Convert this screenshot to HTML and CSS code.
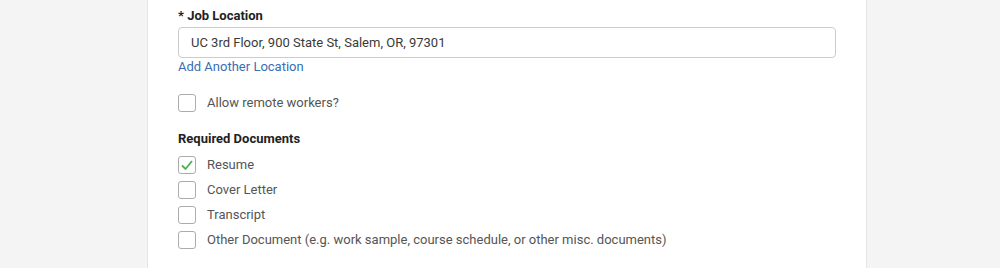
FILE: index.html
```html
<!DOCTYPE html>
<html>

<head>
  <meta charset="UTF-8" />
  <title>Job Posting</title>
  <link rel="stylesheet" href="styles.css">
</head>

<body>
  <div class="panel">
    <div class="field">
      <div class="field-label">* Job Location</div>
      <div class="text-input">UC 3rd Floor, 900 State St, Salem, OR, 97301</div>
      <a class="link" href="#">Add Another Location</a>
    </div>

    <div class="check-row remote">
      <span class="check"></span>
      <span class="check-label">Allow remote workers?</span>
    </div>

    <div class="field-label docs-title">Required Documents</div>
    <div class="check-list">
      <div class="check-row">
        <span class="check checked">
          <svg width="14" height="14" viewBox="0 0 14 14"><path d="M2 7.5 L5.5 11 L12 3" fill="none" stroke="#4caf50" stroke-width="1.8" /></svg>
        </span>
        <span class="check-label">Resume</span>
      </div>
      <div class="check-row">
        <span class="check"></span>
        <span class="check-label">Cover Letter</span>
      </div>
      <div class="check-row">
        <span class="check"></span>
        <span class="check-label">Transcript</span>
      </div>
      <div class="check-row">
        <span class="check"></span>
        <span class="check-label">Other Document (e.g. work sample, course schedule, or other misc. documents)</span>
      </div>
    </div>
  </div>
</body>

</html>
```

FILE: styles.css
```css
body {
  margin: 0;
  background: #f4f4f4;
  font-family: Roboto, "Liberation Sans", sans-serif;
  font-size: 13px;
  color: #555;
}

.panel {
  margin-left: 147px;
  width: 720px;
  height: 268px;
  box-sizing: border-box;
  background: #fff;
  border-left: 1px solid #e6e6e6;
  border-right: 1px solid #e6e6e6;
  padding: 8px 0 0 30px;
}

.field-label {
  font-weight: bold;
  color: #222;
  line-height: 16px;
  margin-bottom: 3px;
}

.text-input {
  width: 658px;
  height: 31px;
  box-sizing: border-box;
  border: 1px solid #ccc;
  border-radius: 4px;
  padding-left: 12px;
  line-height: 30px;
  font-size: 13px;
  color: #3a3a3a;
}

.link {
  display: block;
  line-height: 18px;
  color: #3a6db3;
  text-decoration: none;
}

.check-row {
  display: flex;
  align-items: center;
  height: 18px;
  margin-bottom: 7px;
}

.remote {
  margin-top: 18px;
  margin-bottom: 19px;
}

.docs-title {
  margin-bottom: 9px;
}

.check {
  width: 18px;
  height: 18px;
  box-sizing: border-box;
  border: 1.5px solid #acacac;
  border-radius: 3px;
  margin-right: 11px;
  display: flex;
  align-items: center;
  justify-content: center;
}

.check-label {
  line-height: 18px;
}
```
